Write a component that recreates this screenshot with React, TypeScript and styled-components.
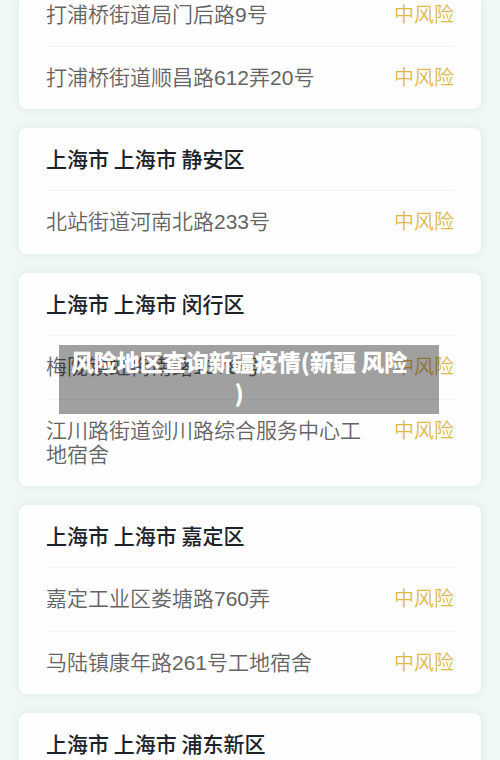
import React from "react";
import styled, { createGlobalStyle } from "styled-components";

const GlobalStyle = createGlobalStyle`
  * { box-sizing: border-box; }
  html, body { margin: 0; }
  body {
    background: #eff8f7;
    font-family: "Noto Sans CJK SC", sans-serif;
    overflow: hidden;
  }
`;

const Page = styled.main`
  position: relative;
  height: 100vh;
  overflow: hidden;
  padding: 0 19px;
  display: flex;
  flex-direction: column;
  gap: 19px;
`;

const Card = styled.section<{ $continued?: boolean }>`
  flex: none;
  padding: 0 27px;
  background: #fefefe;
  border-radius: ${(p) => (p.$continued ? "0 0 8px 8px" : "8px")};
  box-shadow: 0 0 8px rgba(80, 90, 90, 0.1);
`;

const District = styled.h2`
  margin: 0;
  padding: 18px 0 20px;
  font-size: 21px;
  line-height: 24px;
  font-weight: 500;
  color: #1c222c;
`;

const List = styled.ul`
  margin: 0;
  padding: 0;
  list-style: none;
`;

const Row = styled.li<{ $clipped?: boolean }>`
  display: flex;
  justify-content: space-between;
  align-items: flex-start;
  gap: 28px;
  padding: ${(p) => (p.$clipped ? "3px" : "19px")} 0 19px;
  font-family: "Liberation Sans", "Noto Sans CJK SC", sans-serif;
  font-size: 21px;
  line-height: 24px;
  font-weight: 350;
  color: #646464;
  & + & {
    border-top: 1px solid #f3f3f3;
  }
  ${District} + ${List} > &:first-child {
    border-top: 1px solid #f3f3f3;
    padding-bottom: 20px;
  }
`;

const Risk = styled.span`
  flex: none;
  font-size: 20px;
  color: #deb84c;
`;

const Banner = styled.h1`
  position: absolute;
  top: 345px;
  left: 59px;
  right: 61px;
  margin: 0;
  padding: 1px 28px 6px 8px;
  background: rgba(0, 0, 0, 0.37);
  color: #fff;
  font-size: 23px;
  line-height: 31px;
  font-weight: 900;
  text-align: center;
  word-break: break-all;
  line-break: anywhere;
`;

type Group = { district?: string; places: string[] };

const groups: Group[] = [
  { places: ["打浦桥街道局门后路9号", "打浦桥街道顺昌路612弄20号"] },
  { district: "上海市 上海市 静安区", places: ["北站街道河南北路233号"] },
  {
    district: "上海市 上海市 闵行区",
    places: ["梅陇镇虹梅南路1578号", "江川路街道剑川路综合服务中心工地宿舍"],
  },
  {
    district: "上海市 上海市 嘉定区",
    places: ["嘉定工业区娄塘路760弄", "马陆镇康年路261号工地宿舍"],
  },
  { district: "上海市 上海市 浦东新区", places: [] },
];

export default function App() {
  return (
    <>
      <GlobalStyle />
      <Page>
        {groups.map((group, g) => (
          <Card key={g} $continued={!group.district}>
            {group.district && <District>{group.district}</District>}
            <List>
              {group.places.map((place, i) => (
                <Row key={place} $clipped={!group.district && i === 0}>
                  <span>{place}</span>
                  <Risk>中风险</Risk>
                </Row>
              ))}
            </List>
          </Card>
        ))}
        <Banner>风险地区查询新疆疫情(新疆 风险)</Banner>
      </Page>
    </>
  );
}
